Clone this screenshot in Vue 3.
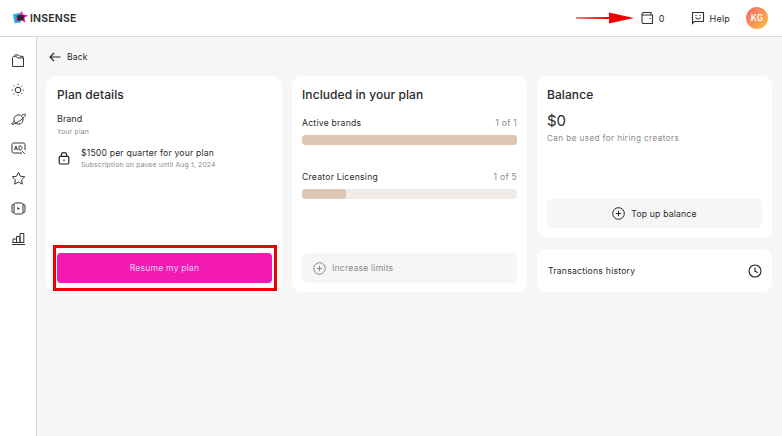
<template>
  <div class="page">
    <header class="topbar">
      <div class="logo">
        <svg width="16" height="16" viewBox="0 0 18 18">
          <path d="M1 5 L9 3 L10 14 L3 15 Z" fill="#26b4dc" />
          <path d="M5 7 L8 6 L11 1 L12.5 5 L18 6 L14 9 L15 14 L10 11.5 L5 13 Z" fill="#f01cb0" />
          <path d="M5.5 6 L13 5.5 L13.5 11 L6.5 12.5 Z" fill="#2a2a2e" />
        </svg>
        <span class="logo-text">INSENSE</span>
      </div>
      <div class="top-actions">
        <div class="wallet">
          <svg width="14" height="14" viewBox="0 0 14 14" fill="none" stroke="#333" stroke-width="1.1">
            <path d="M2 3.2 C2 2 2.8 1.5 3.8 1.5 H11 V4 H12.5 V12.5 H3.5 C2.5 12.5 2 12 2 11 Z M2 3.6 C2.2 4 3 4 3.5 4 H12.5" />
            <path d="M9.5 7.5 H10.8" />
          </svg>
          <span>0</span>
        </div>
        <div class="help">
          <svg width="14" height="14" viewBox="0 0 14 14" fill="none" stroke="#333" stroke-width="1.1">
            <path d="M1.5 1.5 H12.5 V10.5 H3.5 L1.5 12.5 Z" />
            <path d="M4.5 6.5 C5.5 8.5 8.5 8.5 9.5 6.5" />
            <path d="M5 4 V5 M9 4 V5" />
          </svg>
          <span>Help</span>
        </div>
        <div class="avatar">KG</div>
      </div>
    </header>

    <div class="body">
      <aside class="sidebar">
        <svg width="14" height="14" viewBox="0 0 14 14" fill="none" stroke="#333" stroke-width="1">
          <path d="M1.5 3.8 C1.5 2.8 2 2.3 3 2.3 H5.2 L6.6 4 H12.5 V12.5 H1.5 Z" />
          <path d="M3.5 1 H7.6 L8.8 2.3 H12 V4" />
        </svg>
        <svg width="14" height="14" viewBox="0 0 14 14" fill="none" stroke="#333" stroke-width="1">
          <circle cx="7" cy="7" r="2.8" />
          <path d="M7 .8 V2.4 M7 11.6 V13.2 M.8 7 H2.4 M11.6 7 H13.2 M2.6 2.6 L3.7 3.7 M10.3 10.3 L11.4 11.4 M2.6 11.4 L3.7 10.3 M10.3 3.7 L11.4 2.6" stroke-dasharray="1.2 .6" />
        </svg>
        <svg width="15" height="15" viewBox="0 0 15 15" fill="none" stroke="#333" stroke-width="1">
          <circle cx="7.5" cy="7.5" r="4.6" />
          <path d="M10.8 3.2 C13 2 14.4 1.8 14.6 2.4 C15 3.6 12 6.6 8.8 8.8 C5.4 11 2 12.8 .9 12.3 C.4 12 1.2 10.8 3.2 9.2" />
        </svg>
        <svg width="15" height="15" viewBox="0 0 15 15" fill="none" stroke="#333" stroke-width="1">
          <path d="M11 12 H2.5 C1.6 12 1 11.4 1 10.5 V3.5 C1 2.6 1.6 2 2.5 2 H12.5 C13.4 2 14 2.6 14 3.5 V9" />
          <path d="M3.5 9 L5 5 L6.5 9 M4 7.8 H6 M8 5 V9 H9 C10.2 9 11 8.2 11 7 C11 5.8 10.2 5 9 5 H8 M11 10 L14 13" stroke-width=".9" />
        </svg>
        <svg width="15" height="15" viewBox="0 0 15 15" fill="none" stroke="#333" stroke-width="1">
          <path d="M7.5 1.3 L9.4 5.2 L13.7 5.8 L10.6 8.8 L11.3 13.1 L7.5 11.1 L3.7 13.1 L4.4 8.8 L1.3 5.8 L5.6 5.2 Z" />
        </svg>
        <svg width="15" height="15" viewBox="0 0 15 15" fill="none" stroke="#333" stroke-width="1">
          <rect x="3" y="2" width="9" height="11" rx="1.6" />
          <path d="M3 3.5 H2 C1.3 3.5 1 4 1 4.6 V10.4 C1 11 1.3 11.5 2 11.5 H3 M12 3.5 H13 C13.7 3.5 14 4 14 4.6 V10.4 C14 11 13.7 11.5 13 11.5 H12" />
          <path d="M6.4 6 L9 7.5 L6.4 9 Z" fill="#333" stroke="none" />
        </svg>
        <svg width="15" height="15" viewBox="0 0 15 15" fill="none" stroke="#333" stroke-width="1">
          <path d="M1 13.5 H14 M2 11.5 V8 H5.5 V11.5 M5.5 11.5 V5.5 H9 V11.5 M9 11.5 V2.5 H12.8 V11.5 M1.5 11.5 H13.2" />
        </svg>
      </aside>

      <main class="main">
        <div class="back">
          <svg width="12" height="10" viewBox="0 0 12 10" fill="none" stroke="#222" stroke-width="1.1">
            <path d="M11.5 5 H1 M5 1 L1 5 L5 9" />
          </svg>
          <span>Back</span>
        </div>

        <div class="columns">
          <section class="card plan">
            <h2>Plan details</h2>
            <div class="brand">Brand</div>
            <div class="sub brand-sub">Your plan</div>
            <div class="price-row">
              <svg class="lock" width="14" height="14" viewBox="0 0 14 14" fill="none" stroke="#222" stroke-width="1.2">
                <rect x="2.2" y="5.4" width="9.6" height="7.6" rx="1.2" />
                <path d="M4.4 5.4 V3.6 C4.4 .9 9.6 .9 9.6 3.6 V5.4 M7 8.4 V10" />
              </svg>
              <div>
                <div class="price">$1500 per quarter for your plan</div>
                <div class="sub">Subscription on pause until Aug 1, 2024</div>
              </div>
            </div>
            <div class="resume-wrap">
              <button class="resume">Resume my plan</button>
              <div class="red-frame"></div>
            </div>
          </section>

          <section class="card included">
            <h2>Included in your plan</h2>
            <div class="limit">
              <div class="limit-head"><span>Active brands</span><span class="count">1 of 1</span></div>
              <div class="track"><div class="fill" :style="{ width: '100%' }"></div></div>
            </div>
            <div class="limit second">
              <div class="limit-head"><span>Creator Licensing</span><span class="count">1 of 5</span></div>
              <div class="track"><div class="fill" :style="{ width: '20.5%' }"></div></div>
            </div>
            <button class="soft-btn increase">
              <svg width="13" height="13" viewBox="0 0 13 13" fill="none" stroke="#888" stroke-width="1">
                <circle cx="6.5" cy="6.5" r="5.8" />
                <path d="M6.5 3.8 V9.2 M3.8 6.5 H9.2" />
              </svg>
              <span>Increase limits</span>
            </button>
          </section>

          <div class="right-col">
            <section class="card balance">
              <h2>Balance</h2>
              <div class="amount">$0</div>
              <div class="balance-note">Can be used for hiring creators</div>
              <button class="soft-btn topup">
                <svg width="13" height="13" viewBox="0 0 13 13" fill="none" stroke="#222" stroke-width="1">
                  <circle cx="6.5" cy="6.5" r="5.8" />
                  <path d="M6.5 3.8 V9.2 M3.8 6.5 H9.2" />
                </svg>
                <span>Top up balance</span>
              </button>
            </section>
            <section class="card history">
              <span>Transactions history</span>
              <svg width="14" height="14" viewBox="0 0 14 14" fill="none" stroke="#222" stroke-width="1.1">
                <circle cx="7" cy="7" r="6" />
                <path d="M7 3.4 V7.3 L9.8 8.6" />
              </svg>
            </section>
          </div>
        </div>
      </main>
    </div>

    <svg class="red-arrow" width="58" height="12" viewBox="0 0 58 12">
      <path d="M0 5.4 L33 5 L33 .5 L58 6 L33 11.5 L33 7 L0 6.6 Z" fill="#f00000" />
    </svg>
  </div>
</template>

<script setup>
</script>

<style>
html, body {
  margin: 0;
  background: #f6f6f6;
}
</style>

<style scoped>
.page {
  position: relative;
  width: 782px;
  height: 436px;
  overflow: hidden;
  background: #f6f6f6;
  color: #2a2a2a;
  font-family: Inter, "Liberation Sans", sans-serif;
}
.topbar {
  height: 36px;
  box-sizing: content-box;
  background: #fff;
  border-bottom: 1px solid #d8d8d8;
  display: flex;
  align-items: center;
  justify-content: space-between;
  padding: 0 14px 0 12px;
}
.logo {
  display: flex;
  align-items: center;
  gap: 2px;
}
.logo-text {
  font-size: 10.5px;
  font-weight: 600;
  letter-spacing: 0.2px;
}
.top-actions {
  display: flex;
  align-items: center;
  font-size: 9px;
  letter-spacing: 0.2px;
}
.wallet, .help {
  display: flex;
  align-items: center;
}
.wallet {
  gap: 5px;
  margin-right: 26px;
}
.help {
  gap: 5px;
  margin-right: 16px;
}
.avatar {
  width: 22px;
  height: 22px;
  border-radius: 50%;
  background: linear-gradient(135deg, #f4686e, #fbbf3e);
  color: #fff;
  font-size: 8.5px;
  font-weight: 600;
  display: flex;
  align-items: center;
  justify-content: center;
}
.body {
  display: flex;
  height: 399px;
}
.sidebar {
  width: 36px;
  flex: none;
  background: #fff;
  border-right: 1px solid #d8d8d8;
  display: flex;
  flex-direction: column;
  align-items: center;
  gap: 14.8px;
  padding-top: 17px;
  box-sizing: content-box;
}
.main {
  flex: 1;
  padding: 14px 10px 0 9px;
}
.back {
  display: flex;
  align-items: center;
  gap: 6px;
  font-size: 8.5px;
  letter-spacing: 0.15px;
  height: 12px;
  margin-left: 3px;
  margin-bottom: 13px;
}
.columns {
  display: flex;
  gap: 10px;
}
.card {
  background: #fff;
  border-radius: 10px;
  box-sizing: border-box;
}
h2 {
  margin: 0;
  font-size: 12px;
  font-weight: 500;
  line-height: 16px;
  letter-spacing: 0.08px;
}
.plan {
  width: 236px;
  height: 216px;
  padding: 11px 10px 9px 11px;
  display: flex;
  flex-direction: column;
}
.brand {
  margin-top: 10px;
  font-size: 9px;
  line-height: 12px;
}
.sub {
  font-size: 6.8px;
  line-height: 10px;
  letter-spacing: 0.18px;
  color: #8a8a8a;
}
.brand-sub { margin-top: 2px; }
.price-row {
  display: flex;
  align-items: flex-start;
  gap: 10px;
  margin-top: 9px;
}
.lock { margin-top: 5px; }
.price {
  font-size: 8.6px;
  line-height: 14px;
  letter-spacing: 0.2px;
}
.resume-wrap {
  position: relative;
  margin-top: auto;
}
.resume {
  width: 100%;
  height: 30px;
  display: block;
  border: none;
  border-radius: 4px;
  background: #f31ab4;
  color: #fbd0ee;
  font-family: inherit;
  font-size: 8.6px;
  letter-spacing: 0.2px;
}
.red-frame {
  position: absolute;
  left: -4px;
  right: -5px;
  top: -8px;
  bottom: -8px;
  border: 3px solid #f00000;
}
.included {
  width: 235px;
  height: 216px;
  padding: 11px 10px 9px;
  display: flex;
  flex-direction: column;
}
.limit { margin-top: 14px; }
.limit.second { margin-top: 26px; }
.limit-head {
  display: flex;
  justify-content: space-between;
  font-size: 8.6px;
  line-height: 12px;
  letter-spacing: 0.25px;
  margin-bottom: 6px;
}
.count { color: #8a8a8a; }
.track {
  height: 10px;
  border-radius: 3px;
  background: #efebe7;
  overflow: hidden;
}
.fill {
  height: 100%;
  border-radius: 3px;
  background: #dcc7b4;
}
.soft-btn {
  height: 30px;
  width: 100%;
  border: none;
  border-radius: 5px;
  background: #f6f6f6;
  font-family: inherit;
  font-size: 8.6px;
  letter-spacing: 0.2px;
  display: flex;
  align-items: center;
  gap: 6px;
}
.increase {
  margin-top: auto;
  padding: 0 11px;
  color: #8a8a8a;
}
.right-col {
  width: 235px;
  display: flex;
  flex-direction: column;
  gap: 11px;
}
.balance {
  height: 162px;
  padding: 11px 10px 10px;
  display: flex;
  flex-direction: column;
}
.amount {
  margin-top: 8px;
  font-size: 15px;
  line-height: 20px;
}
.balance-note {
  font-size: 8.2px;
  line-height: 12px;
  letter-spacing: 0.38px;
  color: #8a8a8a;
  margin-top: 1px;
}
.topup {
  height: 29px;
  margin-top: auto;
  justify-content: center;
  color: #2a2a2a;
}
.history {
  height: 43px;
  padding: 0 10px 0 11px;
  display: flex;
  align-items: center;
  justify-content: space-between;
  font-size: 8.6px;
  letter-spacing: 0.25px;
}
.red-arrow {
  position: absolute;
  left: 576px;
  top: 12px;
}
</style>
